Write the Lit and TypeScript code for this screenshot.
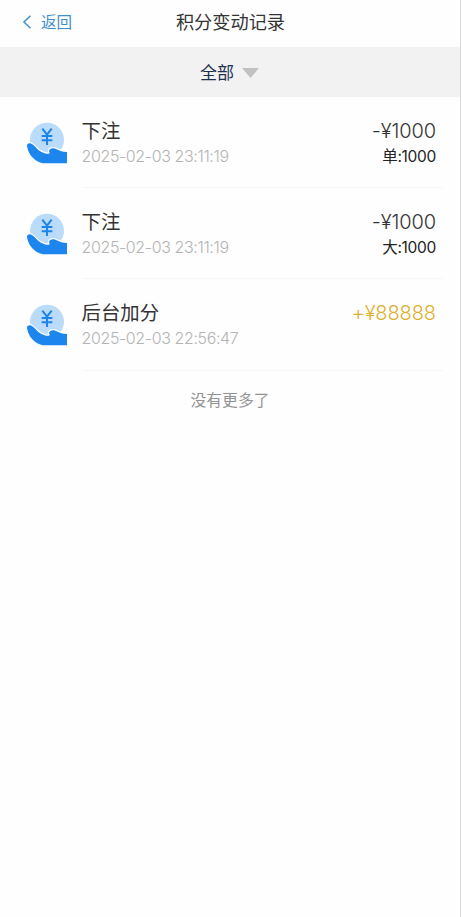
import { LitElement, html, css, nothing } from "lit";
import { customElement, property } from "lit/decorators.js";

interface Entry {
  title: string;
  time: string;
  amount: string;
  detail?: string;
  income?: boolean;
}

const entries: Entry[] = [
  { title: "下注", time: "2025-02-03 23:11:19", amount: "-¥1000", detail: "单:1000" },
  { title: "下注", time: "2025-02-03 23:11:19", amount: "-¥1000", detail: "大:1000" },
  { title: "后台加分", time: "2025-02-03 22:56:47", amount: "+¥88888", income: true },
];

@customElement("hand-coin-icon")
class HandCoinIcon extends LitElement {
  static styles = css`
    :host { display: block; width: 44px; height: 42px; }
    svg { display: block; }
  `;
  render() {
    return html`<svg width="44" height="42" viewBox="30 36 132 126" fill="none">
      <circle cx="96" cy="89" r="51" fill="#badbfa" />
      <path d="M82 56L96 74L110 56M96 72V105M80 78H112M80 91H112" stroke="#1d84e8" stroke-width="6" />
      <path d="M36 109C35 100 44 97 52 103C62 110 66 119 78 125C86 129 95 132 102 131C105 130 104 127 102 124C101 117 111 112 121 116C134 122 143 126 156 126V160H92C80 160 71 157 61 150C48 141 39 127 36 109Z"
        fill="#1c85ee" stroke="#fff" stroke-width="7" stroke-linejoin="round" paint-order="stroke" />
    </svg>`;
  }
}

@customElement("record-row")
class RecordRow extends LitElement {
  @property({ attribute: false }) entry!: Entry;

  static styles = css`
    :host { display: flex; height: 91.2px; padding-left: 25px; box-sizing: border-box; }
    hand-coin-icon { margin: 25px 12.5px 0 0; flex: none; }
    .body {
      flex: 1; display: flex; justify-content: space-between;
      margin-right: 17px; padding: 20px 7px 0 0; box-sizing: border-box;
      border-bottom: 1px solid #f6f6f6;
    }
    .left, .right { display: flex; flex-direction: column; white-space: nowrap; }
    .right { align-items: flex-end; }
    .title { font-size: 19.4px; line-height: 28px; color: #333; }
    .time { font-size: 16px; line-height: 22px; color: #b4b4b4; font-weight: 350; letter-spacing: -0.38px; }
    .amount { font-size: 20px; line-height: 28px; color: #333; font-weight: 350; letter-spacing: -0.1px; }
    .income { color: #dcb02e; }
    .detail { font-size: 15.5px; line-height: 24px; color: #222; letter-spacing: -0.3px; }
  `;

  render() {
    const e = this.entry;
    return html`
      <hand-coin-icon></hand-coin-icon>
      <div class="body">
        <div class="left">
          <span class="title">${e.title}</span>
          <span class="time">${e.time}</span>
        </div>
        <div class="right">
          <span class="amount ${e.income ? "income" : ""}">${e.amount}</span>
          ${e.detail ? html`<span class="detail">${e.detail}</span>` : nothing}
        </div>
      </div>`;
  }
}

@customElement("app-root")
class AppRoot extends LitElement {
  static styles = css`
    :host {
      display: block; height: 917px; box-sizing: border-box;
      background: #fefefe; border-right: 1px solid #d9d9d9;
      font-family: Inter, "Noto Sans CJK SC", sans-serif;
    }
    header {
      display: grid; grid-template-columns: 1fr auto 1fr; align-items: center;
      height: 47px; padding: 0 21px 4px 22px; box-sizing: border-box;
    }
    .back { display: flex; align-items: center; gap: 9px; color: #3e8fd0; font-size: 15.5px; }
    .back span { margin-top: -1px; }
    .heading { font-size: 18.2px; color: #333; margin-top: -1px; }
    .filter {
      display: flex; align-items: center; justify-content: center; gap: 8px;
      height: 50px; padding-right: 1px; box-sizing: border-box;
      background: #f2f2f2; color: #1c3050; font-size: 17px;
    }
    .filter span { margin-top: -2px; }
    .filter svg { margin-top: 2px; }
    .end { margin-top: 18px; text-align: center; font-size: 15.8px; line-height: 24px; color: #929292; }
  `;

  render() {
    return html`
      <header>
        <div class="back">
          <svg width="10" height="14" viewBox="0 0 10 14" fill="none">
            <path d="M8.5 .8L2 7L8.5 13.2" stroke="#3e8fd0" stroke-width="1.5" />
          </svg>
          <span>返回</span>
        </div>
        <div class="heading">积分变动记录</div>
      </header>
      <div class="filter">
        <span>全部</span>
        <svg width="17" height="10" viewBox="0 0 17 10"><path d="M0 0H17L8.5 10Z" fill="#c1c1c1" /></svg>
      </div>
      ${entries.map((e) => html`<record-row .entry=${e}></record-row>`)}
      <div class="end">没有更多了</div>`;
  }
}
